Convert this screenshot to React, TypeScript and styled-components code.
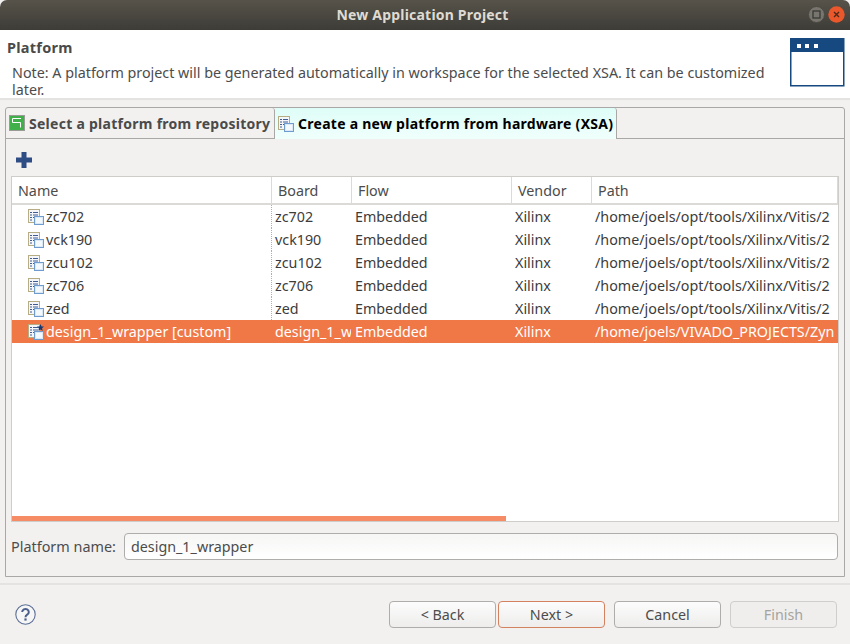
import { createGlobalStyle, styled } from "styled-components";

const GlobalStyle = createGlobalStyle`
  html, body {
    margin: 0;
    padding: 0;
    background: #f2f1f0;
  }
  * {
    box-sizing: border-box;
  }
`;

const Window = styled.div`
  width: 850px;
  height: 644px;
  display: flex;
  flex-direction: column;
  overflow: hidden;
  background: #f2f1f0;
  color: #3c3c3c;
  font-family: "Noto Sans", "DejaVu Sans", sans-serif;
  font-size: 14.3px;
`;

const TitleBar = styled.div`
  position: relative;
  height: 30px;
  flex: none;
  display: flex;
  align-items: center;
  justify-content: center;
  padding: 0 5px 1px 0;
  background: linear-gradient(#57534a, #3d3c37);
  border-radius: 7px 7px 0 0;
  color: #dfdbd2;
  font-weight: 700;
  font-size: 14px;
  letter-spacing: 0.2px;
`;

const WindowButtons = styled.div`
  position: absolute;
  right: 5px;
  top: 6px;
  display: flex;
  gap: 3px;
`;

const Banner = styled.div`
  height: 70px;
  flex: none;
  display: flex;
  justify-content: space-between;
  background: #fff;
  border-bottom: 2px solid #e4e3e1;
  padding: 8px 5px 0 7px;
`;

const BannerTitle = styled.div`
  font-weight: 700;
  font-size: 14.5px;
  letter-spacing: 0.25px;
  line-height: 18px;
  color: #4a4a4a;
`;

const BannerNote = styled.div`
  width: 772px;
  margin: 8px 0 0 5px;
  line-height: 17px;
  font-size: 14.32px;
  color: #4c4c4c;
`;

const Folder = styled.div`
  margin: 7px 5px 0 5px;
  height: 470px;
  flex: none;
  display: flex;
  flex-direction: column;
  border: 1px solid #a9a8a6;
  border-radius: 3px 3px 0 0;
`;

const TabStrip = styled.div`
  height: 31px;
  flex: none;
  display: flex;
  border-bottom: 1px solid #a9a8a6;
`;

const Tab = styled.div<{ $active?: boolean }>`
  height: ${({ $active }) => ($active ? "31px" : "30px")};
  display: flex;
  align-items: center;
  gap: 4px;
  padding-left: 3px;
  width: ${({ $active }) => ($active ? "342px" : "269px")};
  flex: none;
  font-weight: 700;
  font-size: 14px;
  white-space: nowrap;
  letter-spacing: 0.27px;
  color: ${({ $active }) => ($active ? "#000" : "#4a4a4a")};
  background: ${({ $active }) => ($active ? "linear-gradient(#dffdf8, #f0fffc)" : "transparent")};
  border-right: 1px solid #a9a8a6;
  border-radius: 0 3px 0 0;
`;

const FolderBody = styled.div`
  flex: 1;
  display: flex;
  flex-direction: column;
  padding: 0 5px;
`;

const Toolbar = styled.div`
  height: 37px;
  flex: none;
  display: flex;
  align-items: center;
  padding: 5px 0 0 5px;
`;

const Table = styled.div`
  position: relative;
  height: 346px;
  flex: none;
  background: #fff;
  border: 1px solid #cfcdca;
  overflow: hidden;
`;

const columns = "260px 80px 160px 80px 1fr";

const HeaderRow = styled.div`
  display: grid;
  grid-template-columns: ${columns};
  height: 28px;
  border-bottom: 2px solid #dcdad7;
`;

const HeaderCell = styled.div`
  padding-left: 6px;
  line-height: 27px;
  color: #4c4c4c;
  border-right: 1px solid #dcdad7;
  white-space: nowrap;
  overflow: hidden;
`;

const Row = styled.div<{ $selected?: boolean }>`
  display: grid;
  grid-template-columns: ${columns};
  height: 23px;
  background: ${({ $selected }) => ($selected ? "#f07746" : "transparent")};
  color: ${({ $selected }) => ($selected ? "#fff" : "#3c3c3c")};
`;

const Cell = styled.div<{ $dotted?: boolean }>`
  padding-left: 3px;
  line-height: 23px;
  white-space: nowrap;
  overflow: hidden;
  border-right: 1px ${({ $dotted }) => ($dotted ? "dotted #ee9b77" : "solid transparent")};
`;

const NameCell = styled(Cell)`
  display: flex;
  align-items: center;
  gap: 2px;
  padding-left: 16px;
`;

const ScrollBar = styled.div`
  position: absolute;
  left: 0;
  bottom: 0;
  width: 494px;
  height: 5px;
  background: #f58c66;
`;

const NameRow = styled.div`
  display: flex;
  align-items: center;
  height: 27px;
  margin-top: 11px;
  flex: none;
`;

const NameLabel = styled.div`
  width: 113px;
  flex: none;
  font-size: 14.4px;
  color: #4c4c4c;
`;

const NameInput = styled.div`
  flex: 1;
  height: 27px;
  margin-right: 1px;
  padding-left: 6px;
  line-height: 25px;
  color: #4c4c4c;
  background: linear-gradient(#f6f6f5, #fff);
  border: 1px solid #aeadab;
  border-radius: 4px;
`;

const Footer = styled.div`
  flex: 1;
  margin-top: 6px;
  display: flex;
  align-items: center;
  justify-content: space-between;
  border-top: 2px solid #e4e3e1;
  padding: 0 13px 0 15px;
`;

const Buttons = styled.div`
  display: flex;
`;

const Button = styled.div<{ $focused?: boolean; $disabled?: boolean; $gap?: number }>`
  width: 107px;
  height: 27px;
  margin-left: ${({ $gap }) => $gap ?? 0}px;
  display: flex;
  align-items: center;
  justify-content: center;
  color: ${({ $disabled }) => ($disabled ? "#a5a3a0" : "#4c4c4c")};
  background: ${({ $disabled }) => ($disabled ? "#efeeed" : "linear-gradient(#fcfcfc, #eeedec)")};
  border: 1px solid ${({ $focused, $disabled }) => ($focused ? "#d4815f" : $disabled ? "#cfcecb" : "#aeadab")};
  border-radius: 4px;
`;

const WindowIcon = () => (
  <svg width="55" height="49" viewBox="0 0 55 49">
    <rect x="0.75" y="0.75" width="53" height="47" fill="#fff" stroke="#15497f" strokeWidth="1.5" />
    <rect x="1" y="1" width="53" height="13" fill="#15497f" />
    <rect x="7" y="6" width="4" height="4" fill="#fff" />
    <rect x="15" y="6" width="4" height="4" fill="#fff" />
    <rect x="24" y="6" width="4" height="4" fill="#fff" />
  </svg>
);

const MaximizeIcon = () => (
  <svg width="17" height="17" viewBox="0 0 17 17">
    <circle cx="8.5" cy="8.5" r="8" fill="#77756e" stroke="#4a4942" />
    <rect x="5" y="5" width="7" height="7" fill="none" stroke="#35342f" strokeWidth="1.2" />
  </svg>
);

const CloseIcon = () => (
  <svg width="17" height="17" viewBox="0 0 17 17">
    <circle cx="8.5" cy="8.5" r="8.2" fill="#e9572a" />
    <path d="M6 6l5 5M11 6l-5 5" stroke="#4a2a1c" strokeWidth="1.4" />
  </svg>
);

const RepoIcon = () => (
  <svg width="16" height="16" viewBox="0 0 16 16">
    <rect x="0.5" y="0.5" width="15" height="15" fill="#3fb04a" stroke="#9a9a96" />
    <path d="M12 3.5H3.5v4h8v5" fill="none" stroke="#fff" strokeWidth="1" />
  </svg>
);

const PlatformIcon = ({ star }: { star?: boolean }) => (
  <svg width="16" height="16" viewBox="0 0 16 16">
    <rect x="0.5" y="0.5" width="11" height="13" fill="#f5f6fa" stroke="#b6ad84" />
    <path d="M2 3.5h2M5 3.5h5M2 6h2M5 6h5M2 8.5h2M5 8.5h2M2 11h2" stroke="#3f5d94" strokeWidth="1" />
    <rect x="6.5" y="7.5" width="9" height="8" fill="#dbe8f6" stroke="#6f9bce" />
    <rect x="8" y="9" width="6" height="5" fill="#f4f9fe" />
    {star && <path d="M12.5 0l1 2.4 2.5.2-1.9 1.7.6 2.5-2.2-1.3-2.2 1.3.6-2.5L9 2.6l2.5-.2z" fill="#15396f" />}
  </svg>
);

const PlusIcon = () => (
  <svg width="16" height="16" viewBox="0 0 16 16">
    <path d="M5.5 0h5v5.5H16v5h-5.5V16h-5v-5.5H0v-5h5.5z" fill="#2f4d85" />
  </svg>
);

const HelpIcon = () => (
  <svg width="21" height="21" viewBox="0 0 21 21">
    <circle cx="10.5" cy="10.5" r="9.7" fill="#f6f6f6" stroke="#5c6f96" strokeWidth="1.1" />
    <path d="M7.2 8a3.3 3 0 1 1 5 2.6c-1.2.7-1.7 1.2-1.7 2.6" fill="none" stroke="#4a5f8c" strokeWidth="2" />
    <rect x="9.4" y="14.4" width="2.2" height="2.2" fill="#4a5f8c" />
  </svg>
);

const platforms = [
  { name: "zc702", board: "zc702" },
  { name: "vck190", board: "vck190" },
  { name: "zcu102", board: "zcu102" },
  { name: "zc706", board: "zc706" },
  { name: "zed", board: "zed" },
];

export default function App() {
  return (
    <Window>
      <GlobalStyle />
      <TitleBar>
        New Application Project
        <WindowButtons>
          <MaximizeIcon />
          <CloseIcon />
        </WindowButtons>
      </TitleBar>
      <Banner>
        <div>
          <BannerTitle>Platform</BannerTitle>
          <BannerNote>
            Note: A platform project will be generated automatically in workspace for the selected XSA. It can be customized later.
          </BannerNote>
        </div>
        <WindowIcon />
      </Banner>
      <Folder>
        <TabStrip>
          <Tab>
            <RepoIcon />
            Select a platform from repository
          </Tab>
          <Tab $active>
            <PlatformIcon />
            Create a new platform from hardware (XSA)
          </Tab>
        </TabStrip>
        <FolderBody>
          <Toolbar>
            <PlusIcon />
          </Toolbar>
          <Table>
            <HeaderRow>
              <HeaderCell>Name</HeaderCell>
              <HeaderCell>Board</HeaderCell>
              <HeaderCell>Flow</HeaderCell>
              <HeaderCell>Vendor</HeaderCell>
              <HeaderCell>Path</HeaderCell>
            </HeaderRow>
            {platforms.map((p) => (
              <Row key={p.name}>
                <NameCell $dotted>
                  <PlatformIcon />
                  {p.name}
                </NameCell>
                <Cell>{p.board}</Cell>
                <Cell>Embedded</Cell>
                <Cell>Xilinx</Cell>
                <Cell>/home/joels/opt/tools/Xilinx/Vitis/2</Cell>
              </Row>
            ))}
            <Row $selected>
              <NameCell>
                <PlatformIcon star />
                design_1_wrapper [custom]
              </NameCell>
              <Cell>design_1_w</Cell>
              <Cell>Embedded</Cell>
              <Cell>Xilinx</Cell>
              <Cell>/home/joels/VIVADO_PROJECTS/Zyn</Cell>
            </Row>
            <ScrollBar />
          </Table>
          <NameRow>
            <NameLabel>Platform name:</NameLabel>
            <NameInput>design_1_wrapper</NameInput>
          </NameRow>
        </FolderBody>
      </Folder>
      <Footer>
        <HelpIcon />
        <Buttons>
          <Button>&lt; Back</Button>
          <Button $focused $gap={2}>Next &gt;</Button>
          <Button $gap={9}>Cancel</Button>
          <Button $disabled $gap={9}>Finish</Button>
        </Buttons>
      </Footer>
    </Window>
  );
}
